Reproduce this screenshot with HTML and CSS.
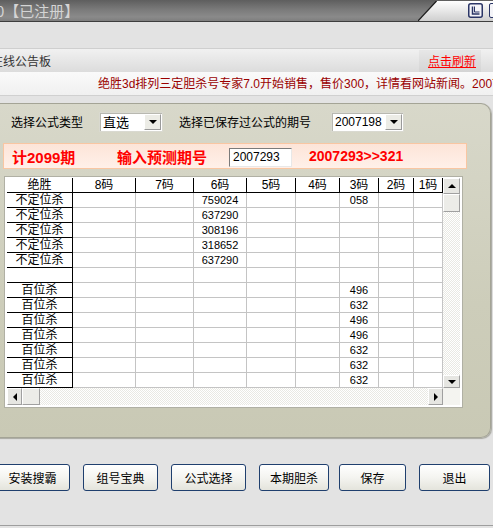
FILE: index.html
```html
<!DOCTYPE html>
<html>
<head>
<meta charset="utf-8">
<link rel="stylesheet" href="styles.css">
</head>
<body>
<div class="titlebar">
  <span class="title">0【已注册】</span>
  <div class="tb-right">
    <svg class="tb-slope" width="19" height="20" viewBox="0 0 19 20">
      <defs>
        <linearGradient id="lg" x1="0" y1="0" x2="0" y2="1">
          <stop offset="0" stop-color="#ffffff"/>
          <stop offset="1" stop-color="#cfcfcf"/>
        </linearGradient>
      </defs>
      <polygon points="19,0 19,20 0,20" fill="url(#lg)"/>
      <line x1="18.5" y1="0" x2="0" y2="20" stroke="#1e1e1e" stroke-width="1.2"/>
    </svg>
    <div class="tb-face">
      <svg class="tb-icon" width="15" height="15" viewBox="0 0 15 15">
        <rect x="0.75" y="0.75" width="13.5" height="13.5" rx="2" fill="#f4f4f8" stroke="#2a3566" stroke-width="1.5"/>
        <path d="M4.5 3.5 V11 H11.5" fill="none" stroke="#2a3566" stroke-width="1.5"/>
        <path d="M6.5 3.5 V9 H11.5" fill="none" stroke="#2a3566" stroke-width="1"/>
      </svg>
      <span class="tb-icon2"></span>
    </div>
  </div>
</div>

<div class="notice-head">
  <span class="notice-title">在线公告板</span>
  <span class="refresh-box"><a class="refresh">点击刷新</a></span>
</div>
<div class="marquee">绝胜3d排列三定胆杀号专家7.0开始销售，售价300，详情看网站新闻。2007年</div>

<div class="panel">
  <div class="row1">
    <span class="lbl lbl1">选择公式类型</span>
    <span class="select sel1"><span class="sel-text sel-cjk">直选</span><span class="sel-btn"><i class="arr-down"></i></span></span>
    <span class="lbl lbl2">选择已保存过公式的期号</span>
    <span class="select sel2"><span class="sel-text">2007198</span><span class="sel-btn"><i class="arr-down"></i></span></span>
  </div>

  <div class="predict">
    <span class="pr-count">计2099期</span>
    <span class="pr-label">输入预测期号</span>
    <span class="pr-input">2007293</span>
    <span class="pr-result">2007293&gt;&gt;321</span>
  </div>

  <div class="gridbox">
    <div class="table">
      <div class="h">绝胜</div><div class="h">8码</div><div class="h">7码</div><div class="h">6码</div><div class="h">5码</div><div class="h">4码</div><div class="h">3码</div><div class="h">2码</div><div class="h">1码</div>

      <div class="k">不定位杀</div><div class="c"></div><div class="c"></div><div class="c">759024</div><div class="c"></div><div class="c"></div><div class="c">058</div><div class="c"></div><div class="c"></div>
      <div class="k">不定位杀</div><div class="c"></div><div class="c"></div><div class="c">637290</div><div class="c"></div><div class="c"></div><div class="c"></div><div class="c"></div><div class="c"></div>
      <div class="k">不定位杀</div><div class="c"></div><div class="c"></div><div class="c">308196</div><div class="c"></div><div class="c"></div><div class="c"></div><div class="c"></div><div class="c"></div>
      <div class="k">不定位杀</div><div class="c"></div><div class="c"></div><div class="c">318652</div><div class="c"></div><div class="c"></div><div class="c"></div><div class="c"></div><div class="c"></div>
      <div class="k">不定位杀</div><div class="c"></div><div class="c"></div><div class="c">637290</div><div class="c"></div><div class="c"></div><div class="c"></div><div class="c"></div><div class="c"></div>
      <div class="k"></div><div class="c"></div><div class="c"></div><div class="c"></div><div class="c"></div><div class="c"></div><div class="c"></div><div class="c"></div><div class="c"></div>
      <div class="k">百位杀</div><div class="c"></div><div class="c"></div><div class="c"></div><div class="c"></div><div class="c"></div><div class="c">496</div><div class="c"></div><div class="c"></div>
      <div class="k">百位杀</div><div class="c"></div><div class="c"></div><div class="c"></div><div class="c"></div><div class="c"></div><div class="c">632</div><div class="c"></div><div class="c"></div>
      <div class="k">百位杀</div><div class="c"></div><div class="c"></div><div class="c"></div><div class="c"></div><div class="c"></div><div class="c">496</div><div class="c"></div><div class="c"></div>
      <div class="k">百位杀</div><div class="c"></div><div class="c"></div><div class="c"></div><div class="c"></div><div class="c"></div><div class="c">496</div><div class="c"></div><div class="c"></div>
      <div class="k">百位杀</div><div class="c"></div><div class="c"></div><div class="c"></div><div class="c"></div><div class="c"></div><div class="c">632</div><div class="c"></div><div class="c"></div>
      <div class="k">百位杀</div><div class="c"></div><div class="c"></div><div class="c"></div><div class="c"></div><div class="c"></div><div class="c">632</div><div class="c"></div><div class="c"></div>
      <div class="k">百位杀</div><div class="c"></div><div class="c"></div><div class="c"></div><div class="c"></div><div class="c"></div><div class="c">632</div><div class="c"></div><div class="c"></div>
    </div>
    <div class="vscroll">
      <span class="sb-btn sb-up"><i class="arr-up"></i></span>
      <span class="sb-thumb-v"></span>
      <span class="sb-track"></span>
      <span class="sb-btn sb-down"><i class="arr-down"></i></span>
    </div>
    <div class="hscroll">
      <span class="sb-btn sb-left"><i class="arr-left"></i></span>
      <span class="sb-thumb-h"></span>
      <span class="sb-track"></span>
      <span class="sb-btn sb-right"><i class="arr-right"></i></span>
    </div>
    <div class="corner"></div>
  </div>
</div>

<div class="btnrow">
  <button class="btn">安装搜霸</button>
  <button class="btn">组号宝典</button>
  <button class="btn">公式选择</button>
  <button class="btn btn-w70">本期胆杀</button>
  <button class="btn btn-w67 btn-tight">保存</button>
  <button class="btn btn-w71">退出</button>
</div>
<div class="bottomline"></div>
</body>
</html>
```

FILE: styles.css
```css
* { box-sizing: border-box; }

html, body {
  margin: 0;
  padding: 0;
}

body {
  width: 493px;
  height: 528px;
  overflow: hidden;
  background: #e3e3e3;
  font-family: "Liberation Sans", "Noto Sans CJK SC", sans-serif;
  font-size: 12px;
  color: #000;
}

/* ---------- title bar ---------- */
.titlebar {
  height: 22px;
  display: flex;
  align-items: flex-end;
  background: linear-gradient(#5e5e5e 0%, #7a7a7a 45%, #8a8a8a 80%, #7e7e7e 100%);
  border-bottom: 1px solid #3e3e3e;
  overflow: hidden;
}

.title {
  align-self: center;
  margin-left: -4px;
  font-family: "Noto Sans CJK SC", sans-serif;
  font-size: 15px;
  line-height: 21px;
  color: #d4d4d4;
  white-space: nowrap;
}

.tb-right {
  margin-left: auto;
  display: flex;
  height: 20px;
  width: 75px;
}

.tb-slope { display: block; flex: none; }

.tb-face {
  flex: 1;
  display: flex;
  align-items: flex-start;
  padding-top: 2px;
  padding-left: 31px;
  gap: 6px;
  background: linear-gradient(#ffffff, #cfcfcf);
}

.tb-icon { display: block; flex: none; }

.tb-icon2 {
  flex: none;
  width: 15px;
  height: 15px;
  border: 1.5px solid #2a3566;
  border-radius: 2px;
  background: #f4f4f8;
}

/* ---------- notice ---------- */
.notice-head {
  margin-top: 26px;
  height: 24px;
  display: flex;
  align-items: stretch;
  justify-content: space-between;
  border-top: 1px solid #cfcfcf;
  background: linear-gradient(#f1f1f1, #dcdcdc);
}

.notice-title {
  margin-left: -9px;
  font-family: "Noto Sans CJK SC", sans-serif;
  font-size: 12px;
  line-height: 23px;
  color: #333;
  white-space: nowrap;
}

.refresh-box {
  width: 62px;
  margin-right: 12px;
  margin-top: 1px;
  padding-left: 9px;
  background: rgba(0, 0, 0, 0.035);
}

.refresh {
  font-family: "Noto Sans CJK SC", sans-serif;
  font-size: 12px;
  line-height: 22px;
  color: #ff0000;
  text-decoration: underline;
  white-space: nowrap;
}

.marquee {
  height: 24px;
  padding-left: 98px;
  line-height: 24px;
  background: linear-gradient(#fafafa, #f0f0f0);
  border-bottom: 1px solid #d0d0d0;
  color: #9a0000;
  font-size: 12px;
  white-space: nowrap;
  overflow: hidden;
}

/* ---------- panel ---------- */
.panel {
  margin-top: 7px;
  margin-left: -10px;
  width: 501px;
  padding: 8px 0 29px 10px;
  border: 1px solid #a4a496;
  border-left: none;
  border-radius: 0 10px 10px 0;
  background: linear-gradient(#d8d8ca, #cdcdba 60%, #c9c9b5);
  box-shadow: 1px 1px 1px rgba(60, 60, 40, 0.35);
}

.row1 {
  height: 20px;
  display: flex;
  align-items: center;
}

.lbl {
  font-family: "Noto Sans CJK SC", sans-serif;
  font-size: 12px;
  line-height: 20px;
  white-space: nowrap;
}
.lbl1 { margin-left: 11px; width: 88px; }
.lbl2 { margin-left: 16px; width: 152px; }

.select {
  height: 20px;
  display: flex;
  align-items: center;
  justify-content: space-between;
  background: #fff;
  border: 1px solid #d9d9d0;
  box-shadow: inset 1px 1px 0 #b8b8b0;
  padding: 0 1px 0 3px;
}
.sel1 { width: 64px; }
.sel2 { width: 73px; }

.sel-text { font-size: 12px; line-height: 18px; }
.sel-cjk { font-family: "Noto Sans CJK SC", sans-serif; font-size: 13px; }

.sel-btn {
  width: 17px;
  height: 16px;
  display: flex;
  align-items: center;
  justify-content: center;
  background: #ecece6;
  border-top: 1px solid #fff;
  border-left: 1px solid #fff;
  border-right: 1px solid #9a9a9a;
  border-bottom: 1px solid #9a9a9a;
}

.arr-down, .arr-up, .arr-left, .arr-right {
  display: block;
  width: 0;
  height: 0;
}
.arr-down {
  border-left: 4px solid transparent;
  border-right: 4px solid transparent;
  border-top: 4px solid #000;
}
.arr-up {
  border-left: 4px solid transparent;
  border-right: 4px solid transparent;
  border-bottom: 4px solid #000;
}
.arr-left {
  border-top: 4px solid transparent;
  border-bottom: 4px solid transparent;
  border-right: 4px solid #000;
}
.arr-right {
  border-top: 4px solid transparent;
  border-bottom: 4px solid transparent;
  border-left: 4px solid #000;
}

/* ---------- predict bar ---------- */
.predict {
  margin-top: 11px;
  margin-left: 3px;
  width: 464px;
  height: 26px;
  display: flex;
  align-items: center;
  padding-left: 8px;
  border: 1px solid #f9c6a2;
  background: linear-gradient(#fde4d8, #fff0e9);
  color: #ff0000;
  font-weight: bold;
  white-space: nowrap;
}

.pr-count {
  width: 105px;
  font-size: 15px;
  font-family: "Liberation Sans", "Noto Sans CJK SC", sans-serif;
}
.pr-label {
  width: 112px;
  font-size: 15px;
  font-family: "Noto Sans CJK SC", sans-serif;
}
.pr-input {
  width: 63px;
  height: 19px;
  margin-top: 2px;
  margin-right: 17px;
  padding-left: 3px;
  background: #fff;
  border-top: 1px solid #7a7a7a;
  border-left: 1px solid #7a7a7a;
  border-right: 1px solid #e8e8e8;
  border-bottom: 1px solid #e8e8e8;
  color: #000;
  font-weight: normal;
  font-size: 12px;
  line-height: 17px;
}
.pr-result {
  font-size: 14px;
}

/* ---------- grid ---------- */
.gridbox {
  margin-top: 7px;
  margin-left: 4px;
  width: 459px;
  height: 232px;
  padding: 1px 2px 2px 2px;
  border: 1px solid #b0b0a4;
  background: #fff;
  display: grid;
  grid-template-columns: 436px 17px;
  grid-template-rows: 210px 17px;
}

.table {
  display: grid;
  grid-template-columns: 66px 63px 58px 53px 49px 44px 39px 35px 29px;
  grid-auto-rows: 15px;
  overflow: hidden;
}

.h, .k, .c {
  font-size: 12px;
  line-height: 14px;
  text-align: center;
  white-space: nowrap;
  overflow: hidden;
  background: #fff;
}
.h, .k {
  font-family: "Liberation Sans", "Noto Sans CJK SC", sans-serif;
  border-right: 1px solid #000;
  border-bottom: 1px solid #000;
}
.c {
  font-size: 11px;
  border-right: 1px solid #c4c4c4;
  border-bottom: 1px solid #c4c4c4;
}

.vscroll {
  display: flex;
  flex-direction: column;
}
.hscroll {
  display: flex;
}

.sb-btn {
  flex: none;
  display: flex;
  align-items: center;
  justify-content: center;
  background: #e6e6e2;
  border-top: 1px solid #fff;
  border-left: 1px solid #fff;
  border-right: 1px solid #a0a0a0;
  border-bottom: 1px solid #a0a0a0;
}
.sb-up { height: 16px; }
.sb-down { height: 13px; }
.sb-left, .sb-right { width: 15px; }

.sb-thumb-v {
  flex: none;
  height: 18px;
  background: #ecece8;
  border-top: 1px solid #fff;
  border-left: 1px solid #fff;
  border-right: 1px solid #a0a0a0;
  border-bottom: 1px solid #a0a0a0;
}
.sb-thumb-h {
  flex: none;
  width: 18px;
  background: #ecece8;
  border-top: 1px solid #fff;
  border-left: 1px solid #fff;
  border-right: 1px solid #a0a0a0;
  border-bottom: 1px solid #a0a0a0;
}

.sb-track {
  flex: 1;
  background-color: #f6f6f2;
  background-image: repeating-conic-gradient(#ffffff 0 25%, #e9e9e3 0 50%);
  background-size: 2px 2px;
}

.corner {
  background: #f4f4f0;
}

/* ---------- buttons ---------- */
.btnrow {
  margin-top: 26px;
  margin-left: -5px;
  display: flex;
  gap: 13px;
}

.btn {
  flex: none;
  width: 75px;
  height: 27px;
  padding: 0;
  border: 1px solid #1f3f6e;
  border-radius: 3px;
  background: linear-gradient(#ffffff, #f4f4f0 50%, #e4e4dc);
  font-family: "Noto Sans CJK SC", sans-serif;
  font-size: 12px;
  color: #000;
}
.btn-w70 { width: 70px; }
.btn-w67 { width: 67px; }
.btn-w71 { width: 71px; }
.btn-tight { margin-left: -3px; }

.bottomline {
  margin-top: 34px;
  height: 1px;
  background: #9e9e9e;
}
```
